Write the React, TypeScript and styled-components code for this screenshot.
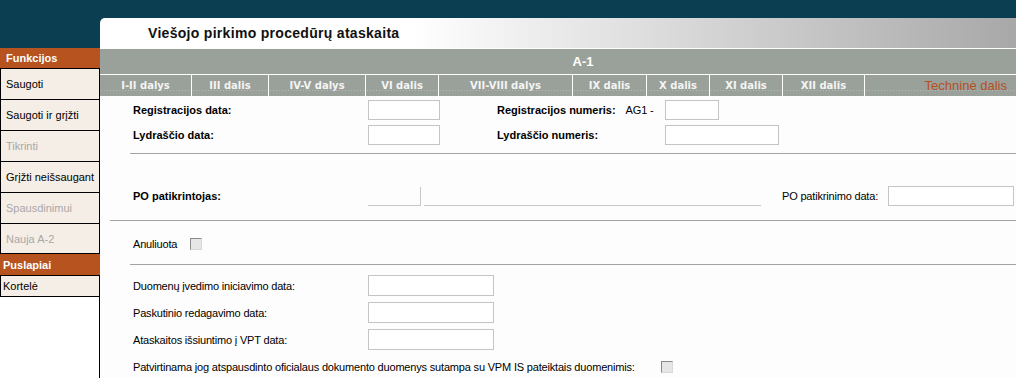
import React from "react";
import styled, { createGlobalStyle } from "styled-components";

const GlobalStyle = createGlobalStyle`
  html, body {
    margin: 0;
    padding: 0;
    background: #ffffff;
  }
  body {
    font-family: "Liberation Sans", Arial, sans-serif;
    font-size: 11px;
    color: #000000;
  }
  * {
    box-sizing: border-box;
  }
`;

const Page = styled.div`
  display: grid;
  grid-template-columns: 100px 1fr;
  width: 1016px;
  height: 378px;
  overflow: hidden;
`;

const Sidebar = styled.div`
  display: flex;
  flex-direction: column;
  border-right: 1px solid #000;
  background: #ffffff;
`;
const SideTop = styled.div`
  height: 48px;
  background: #0c3e52;
  margin-right: -1px;
`;
const SideHeader = styled.div<{ $pad: number; $h: number }>`
  height: ${(p) => p.$h}px;
  display: flex;
  align-items: center;
  padding-left: ${(p) => p.$pad}px;
  background: #b6531e;
  color: #ffffff;
  font-weight: bold;
  font-size: 11px;
  border-top: 1px solid #000;
  margin-right: -1px;
  &:first-of-type {
    border-top: none;
  }
`;
const SideItem = styled.div<{ $disabled?: boolean; $pad: number; $h: number }>`
  height: ${(p) => p.$h}px;
  display: flex;
  align-items: center;
  padding-left: ${(p) => p.$pad}px;
  background: #f5eee6;
  border-top: 1px solid #000;
  border-left: 1px solid #000;
  color: ${(p) => (p.$disabled ? "#a8a8a8" : "#000000")};
  &:last-child {
    border-bottom: 1px solid #000;
  }
`;
const SideGroup = styled.div`
  display: flex;
  flex-direction: column;
`;

const Main = styled.div`
  display: flex;
  flex-direction: column;
  background: #0c3e52;
  padding-top: 18px;
`;
const TitleBar = styled.div`
  height: 30px;
  display: flex;
  align-items: center;
  padding-left: 48px;
  border-top-left-radius: 5px;
  background: linear-gradient(to right, #ffffff 0%, #ffffff 34%, #a8a8a8 100%);
  font-weight: bold;
  font-size: 14px;
  letter-spacing: 0.3px;
  color: #111;
`;
const SectionBar = styled.div`
  height: 26px;
  border-top: 1px solid #ffffff;
  background: #9aa19a;
  display: flex;
  align-items: center;
  justify-content: center;
  padding-left: 50px;
  color: #ffffff;
  font-weight: bold;
  font-size: 13px;
`;
const TabRow = styled.div`
  display: grid;
  grid-template-columns: 91px 77px 97px 73px 134px 74px 63px 73px 82px 152px;
  height: 22px;
  border-top: 1px solid #ffffff;
  background: #9aa19a;
`;
const Tab = styled.div<{ $special?: boolean }>`
  display: flex;
  align-items: center;
  justify-content: ${(p) => (p.$special ? "flex-end" : "center")};
  padding-right: ${(p) => (p.$special ? "9px" : "0")};
  border-left: 1px solid #ffffff;
  &:first-child {
    border-left: none;
  }
  background-image: linear-gradient(to right, rgba(255, 255, 255, 0.28) 1px, transparent 1px);
  background-size: 3px 1px;
  background-repeat: repeat-x;
  background-position: 4px 15px;
  font-family: ${(p) =>
    p.$special ? `"Liberation Sans", Arial, sans-serif` : `"DejaVu Sans", Verdana, sans-serif`};
  font-weight: ${(p) => (p.$special ? "normal" : "bold")};
  font-size: ${(p) => (p.$special ? "13px" : "10px")};
  color: ${(p) => (p.$special ? "#b5501d" : "#f4f4f4")};
`;

const Body = styled.div`
  flex: 1;
  background: #fdfdfd;
  display: flex;
  flex-direction: column;
  letter-spacing: -0.18px;
`;
const Rule = styled.div<{ $indent: number }>`
  height: 1px;
  margin-left: ${(p) => p.$indent}px;
  background: #a3a3a3;
`;

const TopGrid = styled.div`
  display: grid;
  grid-template-columns: 235px 129px 168px 1fr;
  grid-auto-rows: 20px;
  row-gap: 5px;
  align-items: center;
  padding: 4px 0 8px 33px;
`;
const BoldLabel = styled.span`
  font-weight: bold;
  font-size: 11px;
  letter-spacing: 0;
`;
const LabelGroup = styled.div`
  display: flex;
  align-items: center;
  gap: 10px;
`;
const Field = styled.div<{ $w: number; $h?: number }>`
  width: ${(p) => p.$w}px;
  height: ${(p) => p.$h ?? 20}px;
  border: 1px solid #c4c4c4;
  background: #ffffff;
`;

const PoRow = styled.div`
  display: flex;
  align-items: center;
  height: 20px;
  padding: 0 0 0 33px;
  margin: 32px 0 14px;
`;
const PoLabel = styled(BoldLabel)`
  width: 235px;
`;
const LineField = styled.div<{ $w: number; $gap: number; $side?: boolean }>`
  width: ${(p) => p.$w}px;
  height: 19px;
  margin-left: ${(p) => p.$gap}px;
  border-bottom: 1px solid #c8c8c8;
  border-right: ${(p) => (p.$side ? "1px solid #c8c8c8" : "none")};
`;
const PlainLabel = styled.span<{ $gap?: number }>`
  margin-left: ${(p) => p.$gap ?? 0}px;
`;
const EndField = styled(Field)`
  margin-left: auto;
  margin-right: 2px;
`;

const CheckRow = styled.div<{ $gap: number }>`
  display: flex;
  align-items: center;
  gap: ${(p) => p.$gap}px;
  height: 20px;
`;
const AnnulRow = styled(CheckRow)`
  padding-left: 33px;
  margin: 13px 0 10px;
`;
const Check = styled.span`
  display: inline-block;
  width: 12px;
  height: 12px;
  border-top: 1px solid #8a8a8a;
  border-left: 1px solid #8a8a8a;
  border-bottom: 1px solid #d8d8d8;
  border-right: 1px solid #d8d8d8;
  background: #e6e6e6;
`;

const DatesGrid = styled.div`
  display: grid;
  grid-template-columns: 235px 1fr;
  grid-auto-rows: 21px;
  row-gap: 6px;
  align-items: center;
  padding: 10px 0 0 33px;
`;
const WideRow = styled.div`
  grid-column: 1 / span 2;
`;

const functions = [
  { label: "Saugoti" },
  { label: "Saugoti ir grįžti" },
  { label: "Tikrinti", disabled: true },
  { label: "Grįžti neišsaugant" },
  { label: "Spausdinimui", disabled: true },
  { label: "Nauja A-2", disabled: true },
];

const tabs = [
  "I-II dalys",
  "III dalis",
  "IV-V dalys",
  "VI dalis",
  "VII-VIII dalys",
  "IX dalis",
  "X dalis",
  "XI dalis",
  "XII dalis",
];

const dates = [
  "Duomenų įvedimo iniciavimo data:",
  "Paskutinio redagavimo data:",
  "Ataskaitos išsiuntimo į VPT data:",
];

export default function App() {
  return (
    <>
      <GlobalStyle />
      <Page>
        <Sidebar>
          <SideTop />
          <SideGroup>
            <SideHeader $pad={6} $h={20}>Funkcijos</SideHeader>
            {functions.map((f) => (
              <SideItem key={f.label} $pad={5} $h={31} $disabled={f.disabled}>
                {f.label}
              </SideItem>
            ))}
          </SideGroup>
          <SideGroup>
            <SideHeader $pad={3} $h={21}>Puslapiai</SideHeader>
            <SideItem $pad={2} $h={22}>Kortelė</SideItem>
          </SideGroup>
        </Sidebar>

        <Main>
          <TitleBar>Viešojo pirkimo procedūrų ataskaita</TitleBar>
          <SectionBar>A-1</SectionBar>
          <TabRow>
            {tabs.map((t) => (
              <Tab key={t}>{t}</Tab>
            ))}
            <Tab $special>Techninė dalis</Tab>
          </TabRow>

          <Body>
            <TopGrid>
              <BoldLabel>Registracijos data:</BoldLabel>
              <Field $w={72} />
              <LabelGroup>
                <BoldLabel>Registracijos numeris:</BoldLabel>
                <span>AG1 -</span>
              </LabelGroup>
              <Field $w={54} />
              <BoldLabel>Lydraščio data:</BoldLabel>
              <Field $w={72} />
              <BoldLabel>Lydraščio numeris:</BoldLabel>
              <Field $w={114} />
            </TopGrid>
            <Rule $indent={30} />

            <PoRow>
              <PoLabel>PO patikrintojas:</PoLabel>
              <LineField $w={53} $gap={0} $side />
              <LineField $w={337} $gap={3} />
              <PlainLabel $gap={21}>PO patikrinimo data:</PlainLabel>
              <EndField $w={126} />
            </PoRow>
            <Rule $indent={10} />

            <AnnulRow $gap={13}>
              <span>Anuliuota</span>
              <Check />
            </AnnulRow>
            <Rule $indent={30} />

            <DatesGrid>
              {dates.map((d) => (
                <React.Fragment key={d}>
                  <span>{d}</span>
                  <Field $w={126} $h={21} />
                </React.Fragment>
              ))}
              <WideRow>
                <CheckRow $gap={26}>
                  <span>
                    Patvirtinama jog atspausdinto oficialaus dokumento duomenys sutampa su VPM IS
                    pateiktais duomenimis:
                  </span>
                  <Check />
                </CheckRow>
              </WideRow>
            </DatesGrid>
          </Body>
        </Main>
      </Page>
    </>
  );
}
